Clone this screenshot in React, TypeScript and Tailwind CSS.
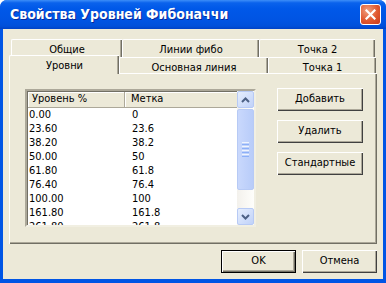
import React from "react";

const font = "font-['DejaVu_Sans_Condensed','Liberation_Sans',Arial,sans-serif]";

const rows: [string, string][] = [
  ["0.00", "0"],
  ["23.60", "23.6"],
  ["38.20", "38.2"],
  ["50.00", "50"],
  ["61.80", "61.8"],
  ["76.40", "76.4"],
  ["100.00", "100"],
  ["161.80", "161.8"],
  ["261.80", "261.8"],
];

function BackTab({ label, w }: { label: string; w: number }) {
  return (
    <div
      style={{ width: w }}
      className="h-[18px] flex justify-center pt-[2px] border-t border-l border-white shadow-[inset_-1px_0_0_#716F64,inset_-2px_0_0_#ACA899] rounded-tl-[2px] bg-[#ECE9D8] text-[11px] text-black"
    >
      {label}
    </div>
  );
}

function FrontTab({ label, w }: { label: string; w: number }) {
  return (
    <div
      style={{ width: w }}
      className="h-[16px] flex justify-center pt-[2px] border-t border-l border-white shadow-[inset_-1px_0_0_#716F64,inset_-2px_0_0_#ACA899] rounded-tl-[2px] bg-[#ECE9D8] text-[11px] text-black"
    >
      {label}
    </div>
  );
}

function Btn({ label, def }: { label: string; def?: boolean }) {
  return (
    <div
      className={
        "h-[23px] flex items-center justify-center text-[11px] text-black bg-[#ECE9D8] " +
        (def
          ? "border border-black shadow-[inset_1px_1px_0_#fff,inset_-1px_-1px_0_#716F64,inset_-2px_-2px_0_#ACA899]"
          : "shadow-[inset_1px_1px_0_#fff,inset_-1px_-1px_0_#404040,inset_-2px_-2px_0_#ACA899]")
      }
    >
      {label}
    </div>
  );
}

function ScrollBtn({ up }: { up?: boolean }) {
  return (
    <div className="h-[17px] w-[17px] rounded-[2px] border border-[#B7CAF5] bg-[linear-gradient(135deg,#E6EEFD,#C0D2F9)] flex items-center justify-center">
      <svg width="9" height="6" viewBox="0 0 9 6">
        <path
          d={up ? "M1 5 L4.5 1.5 L8 5" : "M1 1 L4.5 4.5 L8 1"}
          fill="none"
          stroke="#4D6185"
          strokeWidth="2"
        />
      </svg>
    </div>
  );
}

export default function App() {
  return (
    <div className={"w-[386px] h-[283px] flex flex-col rounded-t-[7px] bg-[#0055E5] overflow-hidden " + font}>
      {/* Title bar */}
      <div className="h-[29px] shrink-0 flex items-center pl-[10px] pr-[5px] bg-[linear-gradient(to_bottom,#3D8EF8_0%,#0A62EC_10%,#0058E8_30%,#0054E3_70%,#0050DA_90%,#0042C6_100%)]">
        <span className="text-white font-bold text-[14px] leading-none -mt-[1px] [text-shadow:1px_1px_0_#0A2A9A]">
          Свойства Уровней Фибоначчи
        </span>
        <div className="ml-auto w-[21px] h-[21px] rounded-[3px] border border-white bg-[radial-gradient(circle_at_35%_30%,#F0A080,#E0582F_55%,#C8391C)] flex items-center justify-center">
          <svg width="11" height="11" viewBox="0 0 11 11">
            <path d="M1.5 1.5 L9.5 9.5 M9.5 1.5 L1.5 9.5" stroke="#fff" strokeWidth="2.2" strokeLinecap="square" />
          </svg>
        </div>
      </div>

      {/* Client */}
      <div className="flex-1 mx-[3px] mb-[4px] bg-[#ECE9D8] flex flex-col">
        {/* Tab row 1 */}
        <div className="mt-[10px] pl-[8px] flex">
          <BackTab label="Общие" w={111} />
          <BackTab label="Линии фибо" w={137} />
          <BackTab label="Точка 2" w={116} />
        </div>
        {/* Tab row 2 */}
        <div className="-mt-[2px] h-[18px] pl-[6px] flex items-end relative z-10">
          <div className="w-[110px] h-[19px] -mb-[1px] flex justify-center pt-[2px] border-t border-l border-white shadow-[inset_-1px_0_0_#716F64,inset_-2px_0_0_#ACA899] rounded-tl-[2px] bg-[#ECE9D8] text-[11px] text-black">
            Уровни
          </div>
          <FrontTab label="Основная линия" w={149} />
          <FrontTab label="Точка 1" w={108} />
        </div>
        {/* Panel */}
        <div className="ml-[6px] w-[368px] h-[171px] border-t border-l border-white shadow-[inset_-1px_-1px_0_#716F64,inset_-2px_-2px_0_#ACA899] flex pt-[15px] pl-[15px]">
          {/* List */}
          <div className="w-[231px] h-[138px] border-2 border-t-[#ACA899] border-l-[#ACA899] border-r-[#F1EFE2] border-b-[#F1EFE2] shadow-[inset_1px_1px_0_#716F64] bg-white flex text-[11px] text-black overflow-hidden">
            <div className="flex-1 flex flex-col pl-[1px] pt-[1px]">
              <div className="h-[16px] shrink-0 flex bg-[#ECE9D8] border-b border-[#ACA899]">
                <div className="w-[97px] pl-[4px] flex items-center border-r border-[#ACA899] shadow-[inset_1px_1px_0_#fff]">Уровень %</div>
                <div className="flex-1 pl-[6px] flex items-center shadow-[inset_1px_1px_0_#fff]">Метка</div>
              </div>
              <div className="flex flex-col">
                {rows.map(([a, b]) => (
                  <div key={a} className="h-[14px] shrink-0 flex items-center">
                    <div className="w-[98px] pl-[1px]">{a}</div>
                    <div className="pl-[6px]">{b}</div>
                  </div>
                ))}
              </div>
            </div>
            {/* Scrollbar */}
            <div className="w-[17px] shrink-0 flex flex-col bg-[linear-gradient(to_right,#F3F1EC,#FEFEFB)]">
              <ScrollBtn up />
              <div className="h-[81px] mt-[1px] rounded-[2px] border border-[#B7CAF5] bg-[linear-gradient(to_right,#C9D8FC,#B8CCF9)] flex flex-col items-center justify-center gap-[1px]">
                <div className="w-[7px] h-[1px] bg-[#EEF4FE]" />
                <div className="w-[7px] h-[1px] bg-[#8CB0F8]" />
                <div className="w-[7px] h-[1px] bg-[#EEF4FE]" />
                <div className="w-[7px] h-[1px] bg-[#8CB0F8]" />
                <div className="w-[7px] h-[1px] bg-[#EEF4FE]" />
                <div className="w-[7px] h-[1px] bg-[#8CB0F8]" />
                <div className="w-[7px] h-[1px] bg-[#EEF4FE]" />
                <div className="w-[7px] h-[1px] bg-[#8CB0F8]" />
              </div>
              <div className="flex-1" />
              <ScrollBtn />
            </div>
          </div>
          {/* Side buttons */}
          <div className="ml-[21px] w-[86px] flex flex-col gap-[9px] -mt-[1px]">
            <Btn label="Добавить" />
            <Btn label="Удалить" />
            <Btn label="Стандартные" />
          </div>
        </div>
        {/* Bottom buttons */}
        <div className="mt-[6px] flex justify-end gap-[6px] pr-[6px]">
          <div className="w-[75px]">
            <Btn label="OK" def />
          </div>
          <div className="w-[75px]">
            <Btn label="Отмена" />
          </div>
        </div>
      </div>
    </div>
  );
}
